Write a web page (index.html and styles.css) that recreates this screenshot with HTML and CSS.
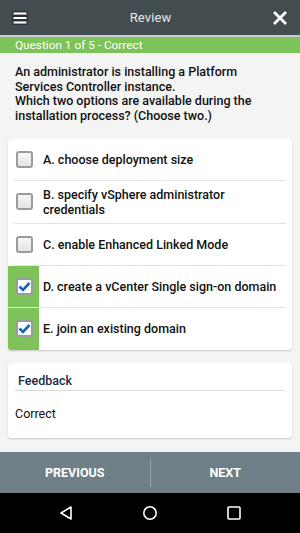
FILE: index.html
```html
<!DOCTYPE html>
<html>
<head>
<meta charset="utf-8">
<link rel="stylesheet" href="styles.css">
</head>
<body>
<div class="screen">
  <header class="appbar">
    <svg class="menu" width="16" height="14" viewBox="0 0 16 14">
      <rect x="1" y="1" width="14" height="3" fill="#fff" stroke="#111" stroke-width="0.8"/>
      <rect x="1" y="5.5" width="14" height="3" fill="#fff" stroke="#111" stroke-width="0.8"/>
      <rect x="1" y="10" width="14" height="3" fill="#fff" stroke="#111" stroke-width="0.8"/>
    </svg>
    <div class="title">Review</div>
    <svg class="close" width="14" height="14" viewBox="0 0 14 14">
      <path d="M2 2 L12 12 M12 2 L2 12" stroke="#fff" stroke-width="2.8" stroke-linecap="square"/>
    </svg>
  </header>
  <div class="rule"></div>
  <div class="status">Question 1 of 5 - Correct</div>
  <main class="content">
    <p class="question">An administrator is installing a Platform Services Controller instance.<br>Which two options are available during the installation process? (Choose two.)</p>
    <div class="card options">
      <div class="option">
        <div class="cell"><span class="box"></span></div>
        <div class="label">A. choose deployment size</div>
      </div>
      <div class="option">
        <div class="cell"><span class="box"></span></div>
        <div class="label">B. specify vSphere administrator credentials</div>
      </div>
      <div class="option">
        <div class="cell"><span class="box"></span></div>
        <div class="label">C. enable Enhanced Linked Mode</div>
      </div>
      <div class="option selected">
        <div class="cell"><span class="box checked"><svg width="13" height="11" viewBox="0 0 13 11"><path d="M1.5 5.5 L5 9 L11.5 2" fill="none" stroke="#1565c0" stroke-width="2.6"/></svg></span></div>
        <div class="label">D. create a vCenter Single sign-on domain</div>
      </div>
      <div class="option selected last">
        <div class="cell"><span class="box checked"><svg width="13" height="11" viewBox="0 0 13 11"><path d="M1.5 5.5 L5 9 L11.5 2" fill="none" stroke="#1565c0" stroke-width="2.6"/></svg></span></div>
        <div class="label">E. join an existing domain</div>
      </div>
    </div>
    <div class="card feedback">
      <div class="fb-head">Feedback</div>
      <div class="fb-body">Correct</div>
    </div>
  </main>
  <nav class="pager">
    <div class="pbtn">PREVIOUS</div>
    <div class="pdiv"></div>
    <div class="pbtn">NEXT</div>
  </nav>
  <div class="sysbar">
    <svg width="16" height="16" viewBox="0 0 16 16"><path d="M13 2 L3 8 L13 14 Z" fill="none" stroke="#fff" stroke-width="1.6" stroke-linejoin="round"/></svg>
    <svg width="16" height="16" viewBox="0 0 16 16"><circle cx="8" cy="8" r="6.2" fill="none" stroke="#fff" stroke-width="1.6"/></svg>
    <svg width="16" height="16" viewBox="0 0 16 16"><rect x="2" y="2" width="12" height="12" rx="1" fill="none" stroke="#fff" stroke-width="1.6"/></svg>
  </div>
</div>
</body>
</html>
```

FILE: styles.css
```css
* { box-sizing: border-box; }
html, body { margin: 0; padding: 0; }
body {
  font-family: Roboto, "Noto Sans", sans-serif;
  width: 300px;
  height: 533px;
  overflow: hidden;
}
.screen {
  display: flex;
  flex-direction: column;
  height: 533px;
  background: #f4f4f4;
}
.appbar {
  height: 35px;
  background: #434d50;
  display: flex;
  align-items: center;
  justify-content: space-between;
  padding: 0 13px 0 12px;
  flex: none;
}
.appbar .menu { margin-top: 1px; }
.title {
  color: #e6e9e9;
  font-size: 13px;
  letter-spacing: 0.1px;
}
.rule { height: 2px; background: #c9cfcf; flex: none; }
.status {
  height: 16px;
  background: #7dc35a;
  color: #fff;
  font-size: 11.8px;
  line-height: 16px;
  padding-left: 15px;
  flex: none;
}
.content {
  flex: 1;
  padding: 12px 0 0;
}
.question {
  margin: 0 15px 15px;
  font-size: 12.5px;
  line-height: 14.7px;
  font-weight: 500;
  color: #111;
}
.card {
  background: #fff;
  margin: 0 8px;
  border-radius: 3px;
  box-shadow: 0 1px 2px rgba(0,0,0,0.18);
}
.options { overflow: hidden; }
.option {
  display: flex;
  min-height: 42px;
  margin: 0 6px 0 6px;
  border-bottom: 1px solid #e2e2e2;
}
.option.selected { margin-left: 0; }
.option.last { border-bottom: none; }
.cell {
  width: 25px;
  display: flex;
  align-items: center;
  padding-left: 2px;
  flex: none;
}
.selected .cell {
  width: 31px;
  background: #7dc35a;
  padding-left: 8px;
}
.box {
  width: 17px;
  height: 17px;
  border: 2px solid #9b9b9b;
  border-radius: 3px;
  background: linear-gradient(#f6f6f6, #e4e4e4);
  display: flex;
  align-items: center;
  justify-content: center;
}
.box.checked { background: #fff; }
.label {
  flex: 1;
  display: flex;
  align-items: center;
  padding: 6px 6px 6px 4px;
  font-size: 12.5px;
  line-height: 15px;
  font-weight: 500;
  color: #111;
}
.feedback { margin-top: 13px; height: 75px; }
.fb-head {
  margin: 0 7px;
  height: 28px;
  padding: 11px 0 0 3px;
  font-size: 12.5px;
  font-weight: 500;
  color: #1e2a48;
  border-bottom: 1px solid #dcdcdc;
  line-height: 14px;
}
.fb-body {
  padding: 16px 7px 0;
  font-size: 12.5px;
  color: #111;
  line-height: 14px;
}
.pager {
  height: 41px;
  background: #6e7f87;
  display: flex;
  align-items: center;
  flex: none;
}
.pbtn {
  flex: 1;
  text-align: center;
  color: #fff;
  font-weight: 700;
  font-size: 12.5px;
}
.pdiv {
  width: 1px;
  height: 28px;
  background: #98a6ac;
}
.sysbar {
  height: 40px;
  background: #000;
  display: flex;
  align-items: center;
  justify-content: center;
  gap: 68px;
  flex: none;
}
```
